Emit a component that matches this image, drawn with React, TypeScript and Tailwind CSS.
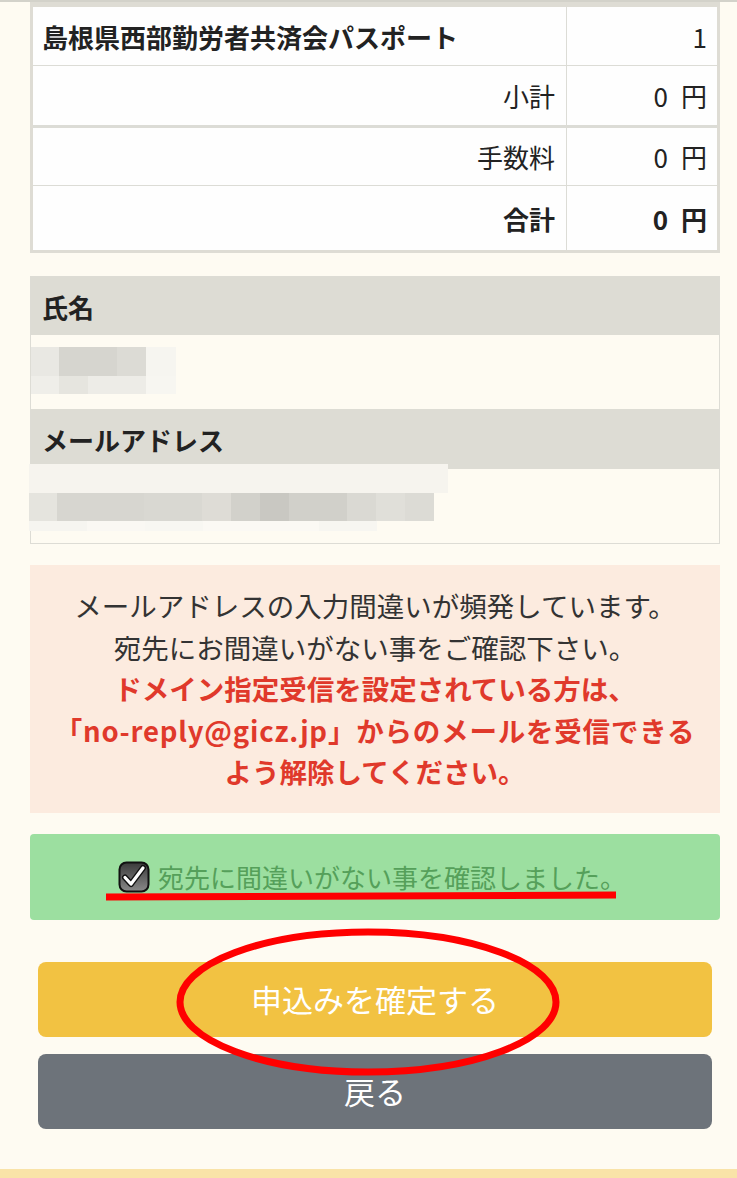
import React from 'react';

const FONT = "font-[family-name:'Noto_Sans_CJK_JP','Noto_Sans',sans-serif]";

const CheckIcon = () => (
    <svg width="32" height="32" viewBox="0 0 32 32" className="shrink-0">
        <defs>
            <linearGradient id="cb" x1="0" y1="0" x2="0" y2="1">
                <stop offset="0" stopColor="#3a3a3a" />
                <stop offset="1" stopColor="#8a8a8a" />
            </linearGradient>
        </defs>
        <rect x="1.5" y="1.5" width="29" height="29" rx="7" fill="url(#cb)" stroke="#111" strokeWidth="2" />
        <path d="M7 16.5 L13 23 L25 7" fill="none" stroke="#111" strokeWidth="6" strokeLinecap="round" strokeLinejoin="round" />
        <path d="M7 16.5 L13 23 L25 7" fill="none" stroke="#fff" strokeWidth="3.2" strokeLinecap="round" strokeLinejoin="round" />
    </svg>
);

// pixelated blur over personal data
const BlurRow = ({ cells, h }: { cells: [number, string][]; h: number }) => (
    <div className="flex">
        {cells.map(([w, c], i) => (
            <div key={i} style={{ width: w, height: h, background: c }} />
        ))}
    </div>
);

const TotalRow = ({ label, bold, top }: { label: string; bold?: boolean; top?: string }) => (
    <div className={`flex bg-[#fefefe] ${top ?? 'border-t border-[#dcdcd6]'} ${bold ? 'h-[65px] font-bold' : 'h-[60px]'}`}>
        <div className="flex-1 flex items-center justify-end pr-[11px] border-r border-[#dcdcd6]">{label}</div>
        <div className="w-[150px] flex items-center justify-end pr-[10px]">
            <span>0</span>
            <span className="ml-[13px]">円</span>
        </div>
    </div>
);

export default function App() {
    return (
        <div className={`relative w-full min-h-[1178px] bg-[#fefbf2] text-[#222] ${FONT}`}>
            <div className="h-[2px] bg-[#d3d2ca]" />

            <div className="ml-[30px] w-[690px] flex flex-col">
                {/* order table */}
                <div className="bg-[#dedcd4] px-[3px] pt-[5px] pb-[3px] text-[26px]">
                    <div className="flex h-[58px] bg-[#fefefe] font-bold">
                        <div className="flex-1 flex items-center pl-[9px] border-r border-[#dcdcd6]">島根県西部勤労者共済会パスポート</div>
                        <div className="w-[150px] flex items-center justify-end pr-[10px] font-normal">1</div>
                    </div>
                    <TotalRow label="小計" />
                    <TotalRow label="手数料" top="border-t-[3px] border-[#dcdcd6]" />
                    <TotalRow label="合計" bold />
                </div>

                {/* applicant info */}
                <div className="mt-[23px] border border-[#dddcd5] text-[26px]">
                    <div className="h-[58px] bg-[#dddcd4] flex items-center pl-[11px] font-bold">氏名</div>
                    <div className="h-[74px] pt-[12px]">
                        <BlurRow h={29} cells={[[28, '#e9e8e3'], [58, '#d6d5cf'], [29, '#dcdbd5'], [30, '#f6f5f0']]} />
                        <BlurRow h={18} cells={[[28, '#efeee9'], [29, '#e6e5df'], [58, '#edece7'], [30, '#f7f6f1']]} />
                    </div>
                    <div className="h-[60px] bg-[#dddcd4] flex items-center pl-[11px] font-bold">メールアドレス</div>
                    <div className="h-[79px] -mt-[5px] -ml-[2px]">
                        <BlurRow h={29} cells={[[419, '#f6f4ee']]} />
                        <BlurRow h={28} cells={[[28, '#e5e4de'], [87, '#d7d6d0'], [58, '#d9d8d2'], [29, '#dedcd6'], [29, '#d2d1cb'], [29, '#c9c8c2'], [58, '#d1d0ca'], [29, '#dad9d3'], [29, '#e0dfd9'], [29, '#dcdbd5']]} />
                        <BlurRow h={10} cells={[[58, '#f6f5f0'], [58, '#faf8f3'], [58, '#f8f7f2'], [116, '#fbf9f4'], [58, '#f7f6f1']]} />
                    </div>
                </div>

                {/* notice */}
                <div className="mt-[21px] bg-[#fcebdf] pt-[20px] pb-[20px] text-center text-[27.5px] leading-[41.6px] whitespace-nowrap">
                    <p className="text-[#333]">メールアドレスの入力間違いが頻発しています。</p>
                    <p className="text-[#333]">宛先にお間違いがない事をご確認下さい。</p>
                    <p className="text-[#e0392b] font-bold">ドメイン指定受信を設定されている方は、</p>
                    <p className="text-[#e0392b] font-bold tracking-[0.8px]">「no-reply@gicz.jp」からのメールを受信できる</p>
                    <p className="text-[#e0392b] font-bold">よう解除してください。</p>
                </div>

                {/* confirmation */}
                <div className="mt-[21px] h-[86px] rounded-[4px] bg-[#9cdfa0] flex items-center justify-center gap-[8px] pr-[6px]">
                    <CheckIcon />
                    <span className="text-[26px] text-[#55a05a]">宛先に間違いがない事を確認しました。</span>
                </div>

                {/* buttons */}
                <div className="mx-[8px] mt-[42px] flex flex-col gap-[17px]">
                    <button className="h-[75px] rounded-[8px] bg-[#f2c242] text-white text-[31px]">申込みを確定する</button>
                    <button className="h-[75px] rounded-[8px] bg-[#6d737a] text-white text-[31px]">戻る</button>
                </div>
            </div>

            <div className="mt-[40px] h-[10px] bg-[#f9e3a8]" />

            {/* red annotations drawn on the screenshot */}
            <svg className="absolute left-0 top-0 pointer-events-none" width="737" height="1178">
                <path d="M106 897 L616 895" stroke="#f00" strokeWidth="7" fill="none" />
                <ellipse cx="368" cy="1002" rx="188" ry="70" stroke="#f00" strokeWidth="7" fill="none" />
            </svg>
        </div>
    );
}
